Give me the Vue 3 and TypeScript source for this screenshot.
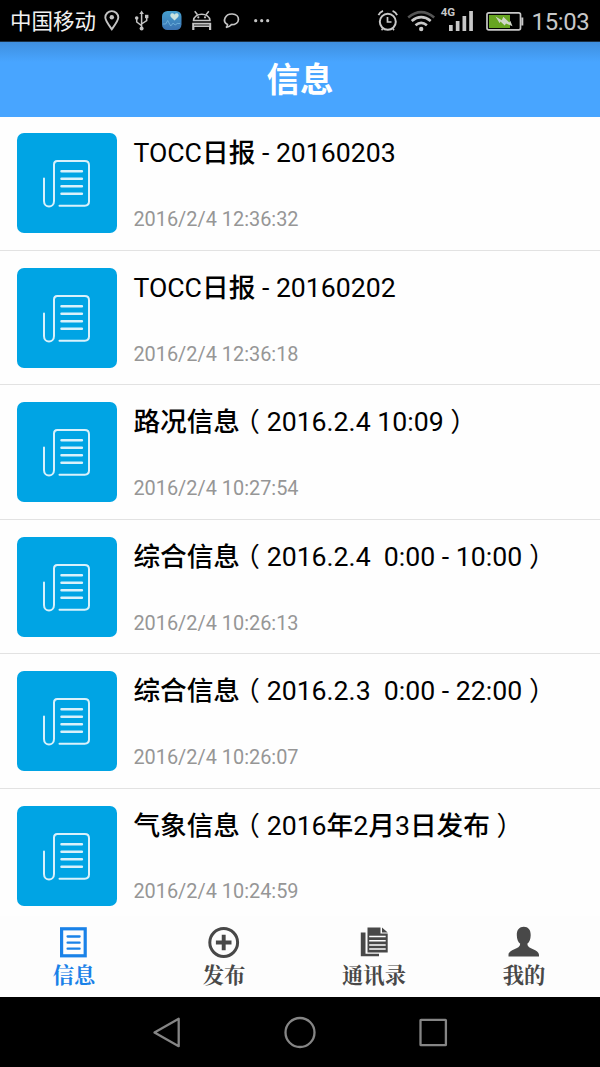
<script setup lang="ts">
interface Message {
  title: string
  time: string
}

interface Tab {
  id: string
  label: string
}

const messages: Message[] = [
  { title: 'TOCC日报 - 20160203', time: '2016/2/4 12:36:32' },
  { title: 'TOCC日报 - 20160202', time: '2016/2/4 12:36:18' },
  { title: '路况信息（2016.2.4 10:09）', time: '2016/2/4 10:27:54' },
  { title: '综合信息（2016.2.4  0:00 - 10:00）', time: '2016/2/4 10:26:13' },
  { title: '综合信息（2016.2.3  0:00 - 22:00）', time: '2016/2/4 10:26:07' },
  { title: '气象信息（2016年2月3日发布）', time: '2016/2/4 10:24:59' },
]

const tabs: Tab[] = [
  { id: 'info', label: '信息' },
  { id: 'publish', label: '发布' },
  { id: 'contacts', label: '通讯录' },
  { id: 'mine', label: '我的' },
]

const activeTab = 'info'

// Brackets and Han characters get their own spans: brackets sit centred in
// their cell, and Han characters are set a little heavier than the digits.
function parts(title: string): string[] {
  return title.split(/([（）]|[\u4e00-\u9fff]+)/).filter((p) => p !== '')
}

function partClass(p: string): string {
  if (p === '（' || p === '）') return 'bracket'
  return /[\u4e00-\u9fff]/.test(p) ? 'han' : ''
}
</script>

<template>
  <div class="screen">
    <header class="status">
      <span class="carrier">中国移动</span>
      <svg class="status-left" width="180" height="42" viewBox="98 0 180 42" fill="none" stroke="#c4c4c4">
        <path d="M111.800 29.300C107.500 23.400 105.300 20.600 105.300 17.600a6.500 6.500 0 0 1 13 0c0 3-2.200 5.800-6.500 11.700z" stroke-width="1.900" />
        <circle cx="111.800" cy="17.300" r="2.200" fill="#c4c4c4" stroke="none" />
        <g stroke-width="1.500">
          <path d="M141.600 13v15M136.700 18.500v3.500l4.900 3.700M146.700 16.500v4l-5.100 3.500" />
          <g fill="#c4c4c4" stroke="none">
            <path d="M141.600 10.500l2.300 3.500h-4.600z" />
            <circle cx="136.700" cy="18" r="1.800" />
            <rect x="145" y="14.800" width="3.400" height="3.400" />
            <circle cx="141.600" cy="28.600" r="2" />
          </g>
        </g>
        <defs>
          <linearGradient id="health" x1="0" y1="0" x2="0" y2="1">
            <stop offset="0" stop-color="#459fce" />
            <stop offset="1" stop-color="#3a72b2" />
          </linearGradient>
        </defs>
        <rect x="162" y="11" width="19.500" height="19" rx="5.500" fill="url(#health)" stroke="none" />
        <path d="M174.500 20.500l-3.600-3.600c-2-2.500 1.400-5.300 3.600-2.500 2.200-2.800 5.600 0 3.600 2.500z" fill="#c9e2df" stroke="none" />
        <path d="M163 24h2.700l2-3.500 3 5.500 2.500-3 2 2 2-1.500h3" stroke="#76b8df" stroke-width=".8" />
        <path d="M193.500 20.500c.5-8.300 16-8.300 16.500 0z" stroke-width="1.500" />
        <g fill="#c4c4c4" stroke="none">
          <circle cx="198.300" cy="17.300" r="1.100" />
          <circle cx="205" cy="17.300" r="1.100" />
          <path d="M192.200 22.800h19v7.200h-2.200v-3h-14.600v3h-2.200z" />
        </g>
        <path d="M194.700 11.200l2.800 3.500M208.800 11.200l-2.800 3.500" stroke-width="1.500" />
        <path d="M194 25h15.300" stroke="#111" stroke-width=".9" />
        <path d="M226 27.500c1.300-.8 1.700-1.700 1.500-2.900-6-3.500-2-11 4.800-10.600 8.300.4 8.400 10.500-1 10.700-1.300 1.500-2.700 2.600-5.300 2.800z" stroke-width="1.700" />
        <g fill="#c4c4c4" stroke="none">
          <circle cx="255.700" cy="20.700" r="1.600" />
          <circle cx="261.700" cy="20.700" r="1.600" />
          <circle cx="267.700" cy="20.700" r="1.600" />
        </g>
      </svg>
      <svg class="status-right" width="152" height="42" viewBox="374 0 152 42" fill="none" stroke="#c8c8c8">
        <circle cx="387.800" cy="21.800" r="8" stroke-width="2" />
        <path d="M387.500 17v5h4" stroke-width="1.700" />
        <path d="M378.500 15.200q1.200-3 4.500-4.300M392.600 10.900q3.300 1.300 4.500 4.300" stroke-width="1.800" />
        <path d="M382.800 28.500l-1.200 1.700M392.800 28.500l1.200 1.700" stroke-width="1.500" />
        <path d="M408.200 17.400q13-10.600 26 0" stroke="#555" stroke-width="2.600" />
        <path d="M411.700 21q9.500-7.600 19 0" stroke-width="2.700" />
        <path d="M415.500 25.200q5.700-4.700 11.400 0" stroke-width="2.700" />
        <circle cx="421.200" cy="29" r="2.200" fill="#c8c8c8" stroke="none" />
        <text x="440.700" y="16" class="network">4G</text>
        <g fill="#c8c8c8" stroke="none">
          <rect x="449" y="25" width="3.700" height="6" />
          <rect x="455.800" y="21" width="3.700" height="10" />
          <rect x="462.500" y="16" width="3.700" height="15" />
          <rect x="469.200" y="11" width="3.700" height="20" />
        </g>
        <rect x="487" y="12.800" width="33.500" height="17" rx="1.800" stroke-width="1.700" />
        <rect x="489" y="15" width="21" height="13" fill="#67a522" stroke="none" />
        <path d="M521.300 17.500h2v8h-2z" fill="#c8c8c8" stroke="none" />
        <path d="M495.500 16.500l6.300 3.800 1.500-3.500 6 5.700 1-1.800 2.200 5.500-6.500-2.700-1.300 2-4.200-4-.8 1.800z" fill="#d0d6c8" stroke="none" />
      </svg>
      <span class="clock">15:03</span>
    </header>

    <div class="titlebar">信息</div>

    <main class="list">
      <article v-for="m in messages" :key="m.time" class="row">
        <div class="thumb">
          <svg width="100" height="100" viewBox="0 0 100 100" fill="none" stroke="#d9f1fb" stroke-width="2" stroke-linecap="round">
            <path d="M27 45.500v22.500c0 7.400 10 7.400 10 0V31.500c0-2.300 1-3.500 3.200-3.500h27.600c2.800 0 4.200 1.600 4.200 4.200v36.400c0 2.700-1.500 4.100-4.200 4.100H42.500" />
            <path d="M44.500 38.200h20.400M44.500 45.700h20.400M44.500 53.300h20.400M44.500 60.800h20.400" stroke-width="2.500" />
          </svg>
        </div>
        <div class="copy">
          <h2><span v-for="(p, i) in parts(m.title)" :key="i" :class="partClass(p)">{{ p }}</span></h2>
          <time>{{ m.time }}</time>
        </div>
      </article>
    </main>

    <nav class="tabs">
      <div v-for="t in tabs" :key="t.id" class="tab" :class="{ active: t.id === activeTab }">
        <svg v-if="t.id === 'info'" width="32" height="32" viewBox="0 0 32 32" fill="none" stroke="currentColor">
          <rect x="3.600" y="2.800" width="23.600" height="27" stroke-width="3.200" />
          <path d="M9.600 10.500h12M9.600 16.700h12M9.600 22.700h12" stroke-width="2.300" stroke-linecap="round" />
        </svg>
        <svg v-else-if="t.id === 'publish'" width="32" height="32" viewBox="0 0 32 32" fill="none" stroke="currentColor">
          <circle cx="15.700" cy="16.500" r="13.900" stroke-width="3" />
          <path d="M15.700 8.700v15.600M7.900 16.500h15.600" stroke-width="3.900" />
        </svg>
        <svg v-else-if="t.id === 'contacts'" width="32" height="32" viewBox="0 0 32 32" fill="currentColor">
          <path d="M2.800 6.500h4.700v21.300h13.500v2.500H2.800z" />
          <path d="M9.500 1.500h13v6h7.200v19H9.500z" />
          <path d="M24 1.500l5.700 5H24z" />
          <path d="M11.200 10.500h16.500M11.200 14.700h16.500M11.200 18.900h16.500M11.200 23.100h16.500" stroke="#fdfdfd" stroke-width="1.500" />
        </svg>
        <svg v-else width="32" height="32" viewBox="0 0 32 32" fill="currentColor">
          <path d="M.5 30.500v-1.800c0-5.700 11.700-5 11.700-11-2.400-2-3.200-4.500-3.400-8.500C8.700 3.700 11.500.8 15.800.8s7 2.900 6.900 8.400c-.2 4-1 6.500-3.400 8.500 0 6 11.700 5.300 11.700 11v1.800z" />
        </svg>
        <span>{{ t.label }}</span>
      </div>
    </nav>

    <footer class="keys">
      <svg width="600" height="70" viewBox="0 0 600 70" fill="none" stroke="#858585" stroke-width="2.300" stroke-linejoin="round">
        <path d="M154.500 35.500L178.700 21.800v27.400z" />
        <circle cx="300" cy="35.500" r="14.500" />
        <rect x="420.500" y="22.800" width="25.400" height="25.400" rx=".5" />
      </svg>
    </footer>
  </div>
</template>

<style>
body {
  margin: 0;
}
</style>

<style scoped>
.screen {
  width: 600px;
  height: 1067px;
  display: flex;
  flex-direction: column;
  overflow: hidden;
  background: #fefefe;
  font-family: Roboto, "Noto Sans CJK SC", sans-serif;
}

.status {
  flex: none;
  display: flex;
  align-items: center;
  box-sizing: border-box;
  height: 42px;
  padding-left: 10px;
  background: #000;
  border-bottom: 1px solid #1b2f42;
  color: #d0d0d0;
}

.carrier {
  width: 88px;
  padding-top: 2px;
  font-size: 21.500px;
  line-height: 42px;
  white-space: nowrap;
  color: #f2f2f2;
}

.status svg {
  flex: none;
}

.status-right {
  margin-left: 96px;
}

.network {
  font: bold 11.500px Roboto, sans-serif;
  fill: #c8c8c8;
  stroke: none;
}

.clock {
  margin-left: 5.500px;
  padding-top: 2px;
  font-size: 23.900px;
  line-height: 42px;
  letter-spacing: -0.300px;
  color: #c8c8c8;
}

.titlebar {
  flex: none;
  height: 74.600px;
  background: linear-gradient(#3f8fdf, #48a5ff 20px);
  color: #fff;
  font-size: 33.600px;
  font-weight: bold;
  line-height: 78px;
  text-align: center;
}

.list {
  flex: none;
  height: 799.400px;
  overflow: hidden;
}

.row {
  display: flex;
  box-sizing: border-box;
  height: 134.450px;
  padding: 16.800px 0 0 16.600px;
  border-bottom: 1px solid #e2e2e2;
}

.thumb {
  flex: none;
  width: 100px;
  height: 100px;
  border-radius: 7px;
  background: #00a4e4;
}

.thumb svg {
  display: block;
}

.copy {
  display: flex;
  flex-direction: column;
  justify-content: space-between;
  height: 98.900px;
  margin-top: 1px;
  margin-left: 16.800px;
}

h2 {
  margin: 0;
  font-size: 26.670px;
  font-weight: 400;
  line-height: 38px;
  white-space: pre;
  color: #000;
}

.han {
  font-weight: 500;
}

.bracket {
  display: inline-block;
  width: 1em;
  line-height: 1;
  text-align: center;
  font-feature-settings: "halt";
}

time {
  font-size: 19.900px;
  line-height: 26px;
  color: #969696;
}

.tabs {
  flex: none;
  display: flex;
  box-sizing: border-box;
  height: 81px;
  padding-top: 10px;
  margin-left: -1px;
  background: #fdfdfd;
}

.tab {
  width: 150px;
  display: flex;
  flex-direction: column;
  align-items: center;
  color: #484848;
  font: bold 21.300px "Noto Serif CJK SC", serif;
}

.tab span {
  line-height: 31px;
}

.tab.active {
  color: #1a82e8;
}

.keys {
  flex: none;
  height: 70px;
  background: #000;
}

.keys svg {
  display: block;
}
</style>
